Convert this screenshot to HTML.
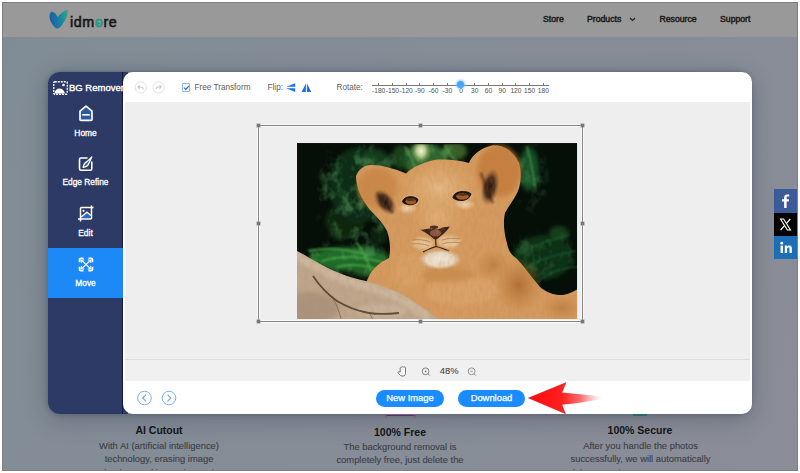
<!DOCTYPE html>
<html><head><meta charset="utf-8">
<style>
*{margin:0;padding:0;box-sizing:border-box}
html,body{width:800px;height:473px;overflow:hidden;background:#fff;font-family:"Liberation Sans",sans-serif}
.abs{position:absolute}
.txt{position:absolute;white-space:nowrap;line-height:1}
#frame{position:absolute;left:2px;top:2px;width:796px;height:469px;background:linear-gradient(120deg,#808c95 0%,#858d97 45%,#8b8d98 100%);border:1px solid #808080;overflow:hidden}
#hdr{position:absolute;left:0;top:0;width:794px;height:34px;background:#999999}
.nav{position:absolute;top:12.4px;font-size:8.7px;font-weight:400;color:#1a1a1a;line-height:1;-webkit-text-stroke:0.45px #1a1a1a}
#modal-shadow{position:absolute;left:48px;top:72px;width:703px;height:342px;border-radius:12px;box-shadow:0 0 5px rgba(30,40,60,.35), 0 5px 24px rgba(30,40,60,.3)}
#side{position:absolute;left:48px;top:72px;width:80px;height:342px;background:#2e3a66;border-radius:12px 0 0 12px;overflow:hidden}
#panel{position:absolute;left:123px;top:72px;width:628.7px;height:342px;background:#fff;border-radius:10px;overflow:hidden}
.lbl{position:absolute;color:#fff;font-size:8.4px;font-weight:400;-webkit-text-stroke:0.3px #fff;white-space:nowrap;text-align:center;width:75px;left:0;line-height:1}
.tick{position:absolute;top:82px;width:1px;height:4px;background:#666}
.rl{position:absolute;top:87px;font-size:6.6px;color:#444;line-height:1;width:20px;text-align:center}
.desc{position:absolute;font-size:9.4px;color:#3c3f47;-webkit-text-stroke:0.12px #3c3f47;text-align:center;line-height:13.25px;white-space:normal}
.ttl{position:absolute;font-size:10.5px;font-weight:700;color:#141414;line-height:1;text-align:center}
</style></head><body>
<div id="frame">
  <div id="hdr">
    <svg class="abs" style="left:40px;top:0px" width="28" height="28" viewBox="0 0 28 28">
      <defs><linearGradient id="lg1" x1="0" y1="0.2" x2="1" y2="0"><stop offset="0" stop-color="#1c5fa6"/><stop offset="0.5" stop-color="#1a85a0"/><stop offset="1" stop-color="#2aab84"/></linearGradient></defs>
      <path d="M9 8.8 C11 8.5 13 11 14.8 14 C17 11 20 8 24.8 6.5 C24.5 12 23 17 19 22 C17.5 24 16 25.6 14.5 25.6 C12.5 25.6 11 23.5 9.5 21.5 C7.5 18.5 6.3 16 6.5 13 C6.7 10.5 7.5 9 9 8.8 Z" fill="url(#lg1)"/>
    </svg>
    <div class="txt" style="left:67px;top:12.2px;font-size:14.3px;font-weight:400;color:#141414;letter-spacing:0.6px;-webkit-text-stroke:0.55px #141414">idm<span style="color:#1f9a86;-webkit-text-stroke:0.55px #1f9a86">o</span>re</div>
    <svg class="abs" style="left:92.6px;top:16.8px" width="6" height="7" viewBox="0 0 6 7"><path d="M1.6 1.6 L4.6 3.5 L1.6 5.4 Z" fill="#1f9a86"/></svg>
    <div class="nav" style="left:540px">Store</div>
    <div class="nav" style="left:584px">Products</div>
    <svg class="abs" style="left:626px;top:14px" width="7" height="5" viewBox="0 0 7 5"><path d="M1 1 L3.5 3.5 L6 1" stroke="#222" stroke-width="1.2" fill="none"/></svg>
    <div class="nav" style="left:656.5px">Resource</div>
    <div class="nav" style="left:717px">Support</div>
  </div>
</div>

<!-- background page text -->
<div class="abs" style="left:0;top:0;width:797px;height:470px;overflow:hidden">

<div class="abs" style="left:385px;top:414.5px;width:31px;height:1.3px;background:#8a2a86"></div><div class="abs" style="left:385px;top:415px;width:2px;height:4px;background:linear-gradient(#a05aa0,rgba(160,90,160,0))"></div><div class="abs" style="left:414px;top:415px;width:2px;height:4px;background:linear-gradient(#a05aa0,rgba(160,90,160,0))"></div>
<div class="abs" style="left:633px;top:414px;width:14px;height:2px;background:#2a8a7a"></div>
<div class="ttl" style="left:109px;top:425.3px;width:100px">AI Cutout</div>
<div class="desc" style="left:89px;top:439px;width:140px">With AI (artificial intelligence) technology, erasing image background is precise and</div>
<div class="ttl" style="left:350px;top:427px;width:100px">100% Free</div>
<div class="desc" style="left:325px;top:440px;width:150px">The background removal is completely free, just delete the background with the clean image</div>
<div class="ttl" style="left:590px;top:425.3px;width:100px">100% Secure</div>
<div class="desc" style="left:563px;top:439px;width:155px">After you handle the photos successfully, we will automatically delete your images to protect your</div>

</div>
<!-- social -->
<div class="abs" style="left:774px;top:189px;width:23px;height:24px;background:#3d5a99"></div>
<svg class="abs" style="left:774px;top:189px" width="23" height="24" viewBox="0 0 23 24"><path d="M12.6 19 V12.6 H14.8 L15.1 10.2 H12.6 V8.8 C12.6 8.1 12.8 7.6 13.8 7.6 H15.2 V5.5 C14.9 5.5 14.2 5.4 13.3 5.4 C11.4 5.4 10.1 6.6 10.1 8.6 V10.2 H8 V12.6 H10.1 V19 Z" fill="#fff"/></svg>
<div class="abs" style="left:774px;top:213px;width:23px;height:23px;background:#050505"></div>
<svg class="abs" style="left:774px;top:213px" width="23" height="23" viewBox="0 0 23 23"><path d="M6.5 6 H9.6 L16.5 17 H13.4 Z" fill="none" stroke="#fff" stroke-width="1.1"/><path d="M6.6 17 L10.7 12.3 M12.3 10.6 L16.3 6" stroke="#fff" stroke-width="1.2"/></svg>
<div class="abs" style="left:774px;top:236px;width:23px;height:23px;background:#1d6fb5"></div>
<svg class="abs" style="left:774px;top:236px" width="23" height="23" viewBox="0 0 23 23"><rect x="6.6" y="9.6" width="2.4" height="7.4" fill="#fff"/><circle cx="7.8" cy="7.2" r="1.4" fill="#fff"/><path d="M10.8 9.6 H13 V10.7 C13.5 9.9 14.3 9.4 15.4 9.4 C17.2 9.4 17.8 10.5 17.8 12.4 V17 H15.5 V12.9 C15.5 12 15.3 11.4 14.4 11.4 C13.5 11.4 13.1 12 13.1 13 V17 H10.8 Z" fill="#fff"/></svg>

<div id="modal-shadow"></div>
<div id="side">
  <div class="abs" style="left:74px;top:0;width:1.2px;height:342px;background:#121a46"></div>
  <svg class="abs" style="left:5px;top:9px" width="15" height="14" viewBox="0 0 15 14">
    <rect x="0.75" y="0.75" width="13.5" height="12.5" rx="1" fill="none" stroke="#fff" stroke-width="1.3" stroke-dasharray="2 1"/>
    <circle cx="10.5" cy="4" r="1.3" fill="#fff"/>
    <path d="M1.5 12.5 C2 9 4 7.5 6.5 7.5 C9 7.5 11 9 12 12.5 Z" fill="#fff"/>
  </svg>
  <div class="txt" style="left:21px;top:11.3px;font-size:9.5px;color:#fff;-webkit-text-stroke:0.35px #fff">BG Remover</div>
  <!-- home -->
  <svg class="abs" style="left:30px;top:33px" width="16" height="17" viewBox="0 0 16 17">
    <path d="M2 6.2 L8 1.2 L14 6.2 V14.5 C14 15 13.6 15.3 13 15.3 H3 C2.4 15.3 2 15 2 14.5 Z" fill="#2b5aa0" stroke="#fff" stroke-width="1.7" stroke-linejoin="round"/>
    <rect x="4.2" y="9" width="7.6" height="1.6" fill="#fff"/>
  </svg>
  <div class="lbl" style="top:57.3px">Home</div>
  <!-- edge refine -->
  <svg class="abs" style="left:30px;top:84px" width="16" height="16" viewBox="0 0 16 16">
    <path d="M9 2 H3 C2 2 1.5 2.6 1.5 3.5 V12.8 C1.5 13.7 2 14.3 3 14.3 H12.3 C13.2 14.3 13.8 13.7 13.8 12.8 V6" fill="none" stroke="#fff" stroke-width="1.6" stroke-linecap="round"/>
    <path d="M13.8 1 L10.8 7.5 C10 9.5 8 11 5.2 11.4 C5.5 8.6 7 6.6 9 5.6 Z" fill="#2b5aa0" stroke="#fff" stroke-width="1.3" stroke-linejoin="round"/>
  </svg>
  <div class="lbl" style="top:106.3px">Edge Refine</div>
  <!-- edit -->
  <svg class="abs" style="left:29px;top:133px" width="18" height="18" viewBox="0 0 18 18">
    <path d="M3.5 16.5 V3.5 C3.5 2.8 4 2.5 4.5 2.5 H16.5 M1 14 H13.5 C14.2 14 14.5 13.5 14.5 13 V0.5" fill="none" stroke="#fff" stroke-width="1.5"/>
    <circle cx="6.5" cy="5.8" r="1.1" fill="#fff"/>
    <path d="M4 12.5 L10 7.5 L13.5 10.5 V13 H5 Z" fill="#2b6ac0"/>
    <path d="M3.8 12.3 L10 7.2 L14 10.5" fill="none" stroke="#fff" stroke-width="1.3"/>
  </svg>
  <div class="lbl" style="top:156.5px">Edit</div>
  <div class="abs" style="left:0;top:176px;width:76px;height:50px;background:#1d89f6"></div>
  <!-- move -->
  <svg class="abs" style="left:30px;top:185px" width="16" height="15" viewBox="0 0 16 15">
    <path d="M1.6 5.2 V2.6 C1.6 1.9 2.1 1.4 2.9 1.4 H5.6 M10.4 1.4 H13.1 C13.9 1.4 14.4 1.9 14.4 2.6 V5.2 M14.4 9.8 V12.4 C14.4 13.1 13.9 13.6 13.1 13.6 H10.4 M5.6 13.6 H2.9 C2.1 13.6 1.6 13.1 1.6 12.4 V9.8" fill="none" stroke="#fff" stroke-width="1.8"/>
    <path d="M4 3.6 L12 11.4 M12 3.6 L4 11.4" stroke="#fff" stroke-width="1.3"/>
    <path d="M3.3 3 H6.2 M3.3 3 V5.8 M12.7 3 H9.8 M12.7 3 V5.8 M12.7 12 H9.8 M12.7 12 V9.2 M3.3 12 H6.2 M3.3 12 V9.2" stroke="#fff" stroke-width="1"/>
  </svg>
  <div class="lbl" style="top:207px">Move</div>
</div>
<div id="panel">
  <div class="abs" style="left:2.3px;top:30px;width:624.5px;height:257px;background:#eeeeee"></div>
  <div class="abs" style="left:2.3px;top:287px;width:624.5px;height:22px;background:#f0f0f0;border-top:1px solid #dcdcdc"></div>
  <!-- undo redo -->
  <svg class="abs" style="left:10px;top:9px" width="38" height="13" viewBox="0 0 38 13">
    <circle cx="7.75" cy="6.5" r="5.6" fill="none" stroke="#dcdcdc" stroke-width="0.9"/>
    <path d="M5 6 H8.2 C9.6 6 10.3 7 10 8.4 M6.8 4.3 L5 6 L6.8 7.7" fill="none" stroke="#c8c8c8" stroke-width="1.1"/>
    <circle cx="25.6" cy="6.5" r="5.6" fill="none" stroke="#dcdcdc" stroke-width="0.9"/>
    <path d="M28.3 6 H25.1 C23.7 6 23 7 23.3 8.4 M26.5 4.3 L28.3 6 L26.5 7.7" fill="none" stroke="#c8c8c8" stroke-width="1.1"/>
  </svg>
  <!-- checkbox -->
  <div class="abs" style="left:58.5px;top:11px;width:8.5px;height:8.5px;border:1px solid #8fb4ee;border-radius:1px;background:#fff"></div>
  <svg class="abs" style="left:58.5px;top:11px" width="9" height="9" viewBox="0 0 9 9"><path d="M2 4.6 L3.8 6.3 L7 2.8" fill="none" stroke="#1b6fe0" stroke-width="1.2"/></svg>
  <div class="txt" style="left:71.5px;top:12px;font-size:8.2px;color:#606060">Free Transform</div>
  <div class="txt" style="left:144.5px;top:12px;font-size:8.2px;color:#606060">Flip:</div>
  <svg class="abs" style="left:163px;top:11px" width="26" height="10" viewBox="0 0 26 10">
    <path d="M0.2 3.7 L9.2 0.3 V3.7 Z M0.2 5.2 H9.2 V9.1 Z" fill="#1a73e8"/>
    <path d="M15.6 9.1 L19.9 0.3 V9.1 Z M20.9 0.3 L25.2 9.1 H20.9 Z" fill="#1a73e8"/>
  </svg>
  <div class="txt" style="left:213.5px;top:12px;font-size:8.2px;color:#606060">Rotate:</div>
  <!-- rotate ruler -->
  <div class="abs" style="left:249px;top:13px;width:177px;height:1px;background:#777"></div>
  <div class="abs" style="left:255.20px;top:11px;width:1px;height:3px;background:#777"></div>
<div class="txt" style="left:245.70px;top:15.5px;width:20px;text-align:center;font-size:6.6px;color:#505050">-180</div>
<div class="abs" style="left:268.92px;top:11px;width:1px;height:3px;background:#777"></div>
<div class="txt" style="left:259.42px;top:15.5px;width:20px;text-align:center;font-size:6.6px;color:#505050">-150</div>
<div class="abs" style="left:282.64px;top:11px;width:1px;height:3px;background:#777"></div>
<div class="txt" style="left:273.14px;top:15.5px;width:20px;text-align:center;font-size:6.6px;color:#505050">-120</div>
<div class="abs" style="left:296.36px;top:11px;width:1px;height:3px;background:#777"></div>
<div class="txt" style="left:286.86px;top:15.5px;width:20px;text-align:center;font-size:6.6px;color:#505050">-90</div>
<div class="abs" style="left:310.08px;top:11px;width:1px;height:3px;background:#777"></div>
<div class="txt" style="left:300.58px;top:15.5px;width:20px;text-align:center;font-size:6.6px;color:#505050">-60</div>
<div class="abs" style="left:323.80px;top:11px;width:1px;height:3px;background:#777"></div>
<div class="txt" style="left:314.30px;top:15.5px;width:20px;text-align:center;font-size:6.6px;color:#505050">-30</div>
<div class="abs" style="left:337.52px;top:11px;width:1px;height:3px;background:#777"></div>
<div class="txt" style="left:328.02px;top:15.5px;width:20px;text-align:center;font-size:6.6px;color:#505050">0</div>
<div class="abs" style="left:351.24px;top:11px;width:1px;height:3px;background:#777"></div>
<div class="txt" style="left:341.74px;top:15.5px;width:20px;text-align:center;font-size:6.6px;color:#505050">30</div>
<div class="abs" style="left:364.96px;top:11px;width:1px;height:3px;background:#777"></div>
<div class="txt" style="left:355.46px;top:15.5px;width:20px;text-align:center;font-size:6.6px;color:#505050">60</div>
<div class="abs" style="left:378.68px;top:11px;width:1px;height:3px;background:#777"></div>
<div class="txt" style="left:369.18px;top:15.5px;width:20px;text-align:center;font-size:6.6px;color:#505050">90</div>
<div class="abs" style="left:392.40px;top:11px;width:1px;height:3px;background:#777"></div>
<div class="txt" style="left:382.90px;top:15.5px;width:20px;text-align:center;font-size:6.6px;color:#505050">120</div>
<div class="abs" style="left:406.12px;top:11px;width:1px;height:3px;background:#777"></div>
<div class="txt" style="left:396.62px;top:15.5px;width:20px;text-align:center;font-size:6.6px;color:#505050">150</div>
<div class="abs" style="left:419.84px;top:11px;width:1px;height:3px;background:#777"></div>
<div class="txt" style="left:410.34px;top:15.5px;width:20px;text-align:center;font-size:6.6px;color:#505050">180</div>
<div class="abs" style="left:334.2px;top:9.1px;width:7px;height:7px;border-radius:50%;background:#45a6f5;box-shadow:0 0 2px 1.2px rgba(120,190,250,.75)"></div>
  <!-- photo -->
<svg class="abs" style="left:174px;top:71px" width="281" height="176" viewBox="0 0 281 176">
<defs>
  <radialGradient id="g_glow" cx="0.5" cy="0.5" r="0.5"><stop offset="0" stop-color="#f6f4d8"/><stop offset="0.4" stop-color="#d0dca0" stop-opacity="0.85"/><stop offset="1" stop-color="#6a9a48" stop-opacity="0"/></radialGradient>
  <radialGradient id="rg" cx="0.5" cy="0.5" r="0.5"><stop offset="0" stop-color="#fff" stop-opacity="1"/><stop offset="1" stop-color="#fff" stop-opacity="0"/></radialGradient>
  <radialGradient id="g_face" cx="0.5" cy="0.5" r="0.5"><stop offset="0" stop-color="#e4b884"/><stop offset="1" stop-color="#e0ac72" stop-opacity="0"/></radialGradient>
  <radialGradient id="g_shade" cx="0.5" cy="0.5" r="0.5"><stop offset="0" stop-color="#a8642a" stop-opacity="0.8"/><stop offset="1" stop-color="#b87432" stop-opacity="0"/></radialGradient>
  <radialGradient id="g_earin" cx="0.5" cy="0.5" r="0.5"><stop offset="0" stop-color="#24140e"/><stop offset="0.55" stop-color="#4a2c1c" stop-opacity="0.9"/><stop offset="1" stop-color="#8a5a30" stop-opacity="0"/></radialGradient>
  <radialGradient id="g_muz" cx="0.5" cy="0.5" r="0.5"><stop offset="0" stop-color="#f2eadc"/><stop offset="0.65" stop-color="#e8dac4" stop-opacity="0.95"/><stop offset="1" stop-color="#dcc0a0" stop-opacity="0"/></radialGradient>
  <radialGradient id="g_light" cx="0.5" cy="0.5" r="0.5"><stop offset="0" stop-color="#ecd2ae" stop-opacity="0.9"/><stop offset="1" stop-color="#e6c090" stop-opacity="0"/></radialGradient>
  <filter id="soft" x="-5%" y="-5%" width="110%" height="110%"><feGaussianBlur stdDeviation="0.45"/></filter>
  <filter id="blur2" x="-50%" y="-50%" width="200%" height="200%"><feGaussianBlur stdDeviation="2"/></filter>
  <filter id="blur1" x="-50%" y="-50%" width="200%" height="200%"><feGaussianBlur stdDeviation="1"/></filter>
  <filter id="fur" x="0" y="0" width="100%" height="100%"><feTurbulence type="fractalNoise" baseFrequency="0.35 0.12" numOctaves="2" seed="3"/><feColorMatrix values="0 0 0 0 0.45  0 0 0 0 0.25  0 0 0 0 0.08  0 0 0 1.4 -0.55"/><feComposite in2="SourceGraphic" operator="in"/></filter>
  <filter id="leafnoise" x="0" y="0" width="100%" height="100%"><feTurbulence type="fractalNoise" baseFrequency="0.09 0.07" numOctaves="3" seed="7"/><feColorMatrix values="0 0 0 0 0.10  0 0 0 0 0.36  0 0 0 0 0.12  0 0 0 3.4 -1.6"/></filter>
  <radialGradient id="mfade" cx="0.5" cy="0.5" r="0.5"><stop offset="0" stop-color="#fff"/><stop offset="0.7" stop-color="#fff" stop-opacity="0.7"/><stop offset="1" stop-color="#fff" stop-opacity="0"/></radialGradient>
  <mask id="leafmask"><rect width="281" height="176" fill="#000"/><ellipse cx="62" cy="50" rx="50" ry="60" fill="url(#mfade)"/><ellipse cx="130" cy="20" rx="40" ry="26" fill="url(#mfade)"/><ellipse cx="232" cy="35" rx="22" ry="40" fill="url(#mfade)" opacity="0.6"/><ellipse cx="245" cy="112" rx="38" ry="28" fill="url(#mfade)" opacity="0.6"/><ellipse cx="50" cy="115" rx="50" ry="20" fill="url(#mfade)"/></mask>
  <clipPath id="lionclip"><path d="M59 33 C62 26 67 22 74 22 C84 22 96 25 109 30.5 C116 24 128 18 141 16.5 C152 16 164 17.5 172 20 C175 12 183 5 196 2.2 C208 2 217 9 222 20 C225 30 224 44 219 52 C216 58 211 64 208 70 C206 78 207 90 210 100 C211 106 213 111 219 115 C226 122 233 132 243 144 C250 150 258 152.5 266 152 C272 151 277 148 281 146 V176 H60 C62 160 66 145 73 131 C79 122 86 118 92 115 C94 108 93 96 90 88 C86 80 80 74 74 68 C66 58 59 46 59 33 Z"/></clipPath>
  <clipPath id="clipP"><rect width="281" height="176"/></clipPath>
</defs>
<g clip-path="url(#clipP)">
<rect width="281" height="176" fill="#050e07"/>
<!-- foliage -->
<g filter="url(#blur2)">
  <ellipse cx="62" cy="42" rx="30" ry="38" fill="#123016" opacity="0.9"/>
  <ellipse cx="78" cy="22" rx="16" ry="16" fill="#1a4420" opacity="0.8"/>
  <ellipse cx="48" cy="78" rx="20" ry="18" fill="#0e2a12" opacity="0.9"/>
  <ellipse cx="82" cy="92" rx="9" ry="10" fill="#0e2812" opacity="0.8"/>
  <ellipse cx="128" cy="17" rx="22" ry="17" fill="#3a7436" opacity="0.85"/>
  <ellipse cx="158" cy="8" rx="12" ry="9" fill="#4e8236" opacity="0.7"/>
  <ellipse cx="104" cy="14" rx="9" ry="12" fill="#1f4c22" opacity="0.8"/>
  <ellipse cx="232" cy="26" rx="10" ry="22" fill="#1a5a28" opacity="0.85"/>
  <ellipse cx="52" cy="116" rx="40" ry="12" fill="#24702a" opacity="0.95"/>
  <ellipse cx="72" cy="126" rx="18" ry="8" fill="#226226" opacity="0.9"/>
  <ellipse cx="246" cy="114" rx="30" ry="22" fill="#0f3416" opacity="0.9"/>
  <ellipse cx="262" cy="90" rx="10" ry="7" fill="#184a20" opacity="0.8"/>
</g>
<rect width="281" height="176" filter="url(#leafnoise)" mask="url(#leafmask)" opacity="0.6"/>
<ellipse cx="124" cy="8" rx="11" ry="13" fill="url(#g_glow)"/>
<g fill="none" stroke-linecap="round" filter="url(#blur1)" opacity="0.9">
  <path d="M12 108 C30 104 50 106 70 112 M25 118 C45 112 68 114 88 120 M40 124 C55 120 70 122 86 128 M60 100 C66 108 70 115 74 128" stroke="#4eae4a" stroke-width="1.8"/>
  <path d="M222 112 C235 102 250 98 272 92 M226 128 C240 116 258 112 278 108 M240 140 C250 130 262 125 280 124" stroke="#22663a" stroke-width="1.5" opacity="0.75"/>
  <path d="M108 4 C112 10 116 16 118 26 M148 2 C150 8 154 14 160 18 M230 4 C233 14 236 28 238 44" stroke="#5aa050" stroke-width="1.4"/>
</g>
<rect x="0" y="0" width="281" height="1.2" fill="#151515"/>
<!-- lion -->
<g filter="url(#soft)">
<path d="M59 33 C62 26 67 22 74 22 C84 22 96 25 109 30.5 C116 24 128 18 141 16.5 C152 16 164 17.5 172 20 C175 12 183 5 196 2.2 C208 2 217 9 222 20 C225 30 224 44 219 52 C216 58 211 64 208 70 C206 78 207 90 210 100 C211 106 213 111 219 115 C226 122 233 132 243 144 C250 150 258 152.5 266 152 C272 151 277 148 281 146 V176 H60 C62 160 66 145 73 131 C79 122 86 118 92 115 C94 108 93 96 90 88 C86 80 80 74 74 68 C66 58 59 46 59 33 Z" fill="#d59a5e"/>
<ellipse cx="142" cy="45" rx="40" ry="30" fill="url(#g_face)"/>
<ellipse cx="140" cy="75" rx="28" ry="20" fill="url(#g_face)" opacity="0.7"/>
<ellipse cx="110" cy="66" rx="10" ry="6" fill="url(#g_light)"/>
<ellipse cx="168" cy="62" rx="11" ry="6" fill="url(#g_light)"/>
<ellipse cx="202" cy="28" rx="22" ry="26" fill="#c27634" opacity="0.7" filter="url(#blur2)"/>
<ellipse cx="80" cy="45" rx="20" ry="20" fill="#c67e3c" opacity="0.6" filter="url(#blur2)"/>
<ellipse cx="222" cy="142" rx="24" ry="28" fill="url(#g_shade)"/>
<ellipse cx="196" cy="122" rx="18" ry="16" fill="url(#g_shade)" opacity="0.6"/>
<ellipse cx="265" cy="165" rx="22" ry="14" fill="url(#g_shade)" opacity="0.6"/>
<ellipse cx="165" cy="148" rx="36" ry="14" fill="#e6b27a" opacity="0.35" filter="url(#blur2)"/>
<ellipse cx="112" cy="128" rx="16" ry="16" fill="#e0aa70" opacity="0.4" filter="url(#blur2)"/>
<ellipse cx="150" cy="132" rx="26" ry="8" fill="#b97838" opacity="0.35" filter="url(#blur2)"/>
<!-- ear insides -->
<ellipse cx="88" cy="59" rx="9" ry="15" transform="rotate(-38 88 59)" fill="url(#g_earin)"/>
<ellipse cx="193" cy="44" rx="9" ry="19" transform="rotate(12 193 44)" fill="url(#g_earin)"/>
<path d="M184 30 C188 40 190 50 196 60" stroke="#2a1810" stroke-width="2.5" fill="none" opacity="0.6" filter="url(#blur1)"/>
<path d="M80 50 C86 58 90 64 96 70" stroke="#2a1810" stroke-width="2.5" fill="none" opacity="0.5" filter="url(#blur1)"/>
<!-- light fur around eyes/muzzle -->
<ellipse cx="111" cy="65" rx="10" ry="5" fill="url(#g_light)"/>
<ellipse cx="167" cy="61" rx="11" ry="5" fill="url(#g_light)"/>
<ellipse cx="126" cy="102" rx="12" ry="8" fill="url(#g_light)" opacity="0.8"/>
<ellipse cx="152" cy="100" rx="13" ry="8" fill="url(#g_light)" opacity="0.8"/>
<!-- eyes -->
<ellipse cx="113.3" cy="57.8" rx="8.4" ry="4.9" fill="#e8c89a" opacity="0.6" filter="url(#blur1)"/>
<ellipse cx="165" cy="53" rx="9.8" ry="5.2" fill="#e8c89a" opacity="0.6" filter="url(#blur1)"/>
<path d="M105 58.5 C107 54 111 53 115 53.3 C118 53.6 120.5 55 121.5 57 C120 61 116 62.6 112 62.3 C108.5 62 106 60.5 105 58.5 Z" fill="#140c08"/>
<ellipse cx="113.8" cy="58.2" rx="5.3" ry="3.2" fill="#9a5828"/>
<ellipse cx="113.8" cy="56.6" rx="5" ry="1.5" fill="#3a2012" opacity="0.7"/>
<path d="M155.3 54.5 C157 50 161 48 166 48 C170 48 173 49.2 174.5 51 C173 55.5 169 58 164 58 C160 58 157 56.8 155.3 54.5 Z" fill="#140c08"/>
<ellipse cx="165.3" cy="53.2" rx="6.2" ry="3.5" fill="#a05e2a"/>
<ellipse cx="165.3" cy="51.4" rx="5.8" ry="1.6" fill="#3a2012" opacity="0.7"/>
<!-- nose -->
<ellipse cx="126" cy="100" rx="11" ry="6" fill="#ecd0a8" opacity="0.55" filter="url(#blur1)"/>
<ellipse cx="152" cy="98" rx="12" ry="6" fill="#ecd0a8" opacity="0.55" filter="url(#blur1)"/>
<path d="M116 97 C122 96 128 97 133 99 M115 101 C121 100 127 101 132 103 M145 97 C151 95 157 95 163 96 M145 101 C151 99 157 99 164 100" stroke="#9a6030" stroke-width="0.8" fill="none" opacity="0.7"/>
<path d="M123 86.6 C127 87 130 85.5 133 85.5 C136 85.5 138 86.5 139 86.5 C141 86.5 145 84.5 148 84 C150 83.8 152 83.5 153 83.2 C151 87 147 90.5 142.5 94 C141 95.5 140 96.5 138.5 96.5 C137 96.5 136 95.5 134.5 94 C130 90.5 126 88.5 123 86.6 Z" fill="#3e241a"/>
<ellipse cx="138.5" cy="90" rx="5.5" ry="3.6" fill="#8e5242"/>
<ellipse cx="137" cy="84.2" rx="4.2" ry="1.7" fill="#4a2a22"/>
<path d="M138.7 96 L139 103.5 M126 109 C129 107.5 131 106.5 133.5 105.5 C136 104.5 137.5 104 139 103.5 C141 104 144 105 147 106 C149 107 151 107.5 152 108" stroke="#2e1a12" stroke-width="1.1" fill="none"/>
<ellipse cx="143" cy="116.4" rx="22" ry="10.5" fill="url(#g_muz)"/>
</g>
<rect x="60" y="0" width="221" height="176" fill="#000" filter="url(#fur)" opacity="0.35" clip-path="url(#lionclip)"/>
<!-- log -->
<clipPath id="logclip"><path d="M0 108 C10 113 22 121 35 127 C48 133 60 136 72 139 C85 143 98 147 108 153 C118 159 128 166 135 171 C138 173 141 175 143 177 H0 Z"/></clipPath>
<filter id="lognoise" x="0" y="0" width="100%" height="100%"><feTurbulence type="fractalNoise" baseFrequency="0.18 0.12" numOctaves="3" seed="11"/><feColorMatrix values="0 0 0 0 0.42  0 0 0 0 0.32  0 0 0 0 0.22  0 0 0 2.2 -0.95"/></filter>
<g clip-path="url(#logclip)">
<rect x="0" y="100" width="150" height="77" fill="#bfa58a"/>
<path d="M-5 112 C10 118 22 126 35 132 C48 138 60 141 72 144 C85 148 98 152 108 158 C118 164 126 170 132 176" stroke="#d4c0a6" stroke-width="9" fill="none" opacity="0.65" filter="url(#blur2)"/>
<ellipse cx="12" cy="165" rx="30" ry="16" fill="#9c8670" opacity="0.55" filter="url(#blur2)"/>
<ellipse cx="85" cy="168" rx="25" ry="7" fill="#ccbaa2" opacity="0.6" filter="url(#blur2)"/>
<rect x="0" y="100" width="150" height="77" filter="url(#lognoise)" opacity="0.35"/>
<path d="M16 133 C22 142 30 151 40 158 C50 164 60 168 72 170 C82 171.5 92 171 102 170" stroke="#4a3426" stroke-width="1.8" fill="none" opacity="0.8" filter="url(#soft)"/>
<path d="M36 156 C40 162 42 168 44 176 M72 170 C74 173 75 175 76 177" stroke="#6a5040" stroke-width="1" fill="none" opacity="0.6"/>
</g>

</g>
<rect x="280" y="0" width="1" height="176" fill="#e8e8e8"/>
</svg>
  <!-- photo frame -->
  <div class="abs" style="left:135px;top:53px;width:325px;height:197px;border:1px solid #858585;box-shadow:0 0 0 1px rgba(255,255,255,.7), inset 0 0 0 1px rgba(255,255,255,.7)"></div>
<div class="abs" style="left:134.0px;top:52.0px;width:3px;height:3px;background:#777;box-shadow:0 0 0 0.5px #999"></div>
<div class="abs" style="left:295.5px;top:52.0px;width:3px;height:3px;background:#777;box-shadow:0 0 0 0.5px #999"></div>
<div class="abs" style="left:458.0px;top:52.0px;width:3px;height:3px;background:#777;box-shadow:0 0 0 0.5px #999"></div>
<div class="abs" style="left:134.0px;top:149.5px;width:3px;height:3px;background:#777;box-shadow:0 0 0 0.5px #999"></div>
<div class="abs" style="left:458.0px;top:149.5px;width:3px;height:3px;background:#777;box-shadow:0 0 0 0.5px #999"></div>
<div class="abs" style="left:134.0px;top:248.0px;width:3px;height:3px;background:#777;box-shadow:0 0 0 0.5px #999"></div>
<div class="abs" style="left:295.5px;top:248.0px;width:3px;height:3px;background:#777;box-shadow:0 0 0 0.5px #999"></div>
<div class="abs" style="left:458.0px;top:248.0px;width:3px;height:3px;background:#777;box-shadow:0 0 0 0.5px #999"></div>
  <!-- zoom bar -->
  <svg class="abs" style="left:274px;top:294px" width="10" height="11" viewBox="0 0 10 11">
    <path d="M3.2 6 V2.2 C3.2 1.3 4 0.9 4.7 1.1 C5.2 0.7 6.2 0.7 6.7 1.1 C7.3 0.8 8.3 1 8.5 1.8 V7.6 C8.5 9.1 7.5 10 6.1 10 H5 C4 10 3.3 9.4 2.7 8.7 L1.2 6.8 C0.8 6.2 1.4 5.4 2.2 5.8 Z" fill="#f8f8f8" stroke="#6a6a6a" stroke-width="0.9" stroke-linejoin="round"/>
  </svg>
  <svg class="abs" style="left:298px;top:295px" width="10" height="9" viewBox="0 0 10 9">
    <circle cx="4.6" cy="4.3" r="3.4" fill="none" stroke="#777" stroke-width="0.9"/><circle cx="4.6" cy="4.3" r="0.9" fill="#777"/><path d="M7 6.8 L8.8 8.6" stroke="#777" stroke-width="0.9"/>
  </svg>
  <div class="txt" style="left:316.8px;top:294.3px;font-size:9.4px;color:#3a3a3a;-webkit-text-stroke:0.05px #3a3a3a">48%</div>
  <svg class="abs" style="left:344px;top:295px" width="10" height="9" viewBox="0 0 10 9">
    <circle cx="4.6" cy="4.3" r="3.4" fill="none" stroke="#888" stroke-width="0.9"/><path d="M3.3 4.3 H5.9" stroke="#888" stroke-width="0.8"/><path d="M7 6.8 L8.8 8.6" stroke="#888" stroke-width="0.9"/>
  </svg>
  <!-- footer -->
  <svg class="abs" style="left:13px;top:318px" width="42" height="16" viewBox="0 0 42 16">
    <circle cx="8.5" cy="8" r="6.8" fill="none" stroke="#7ab0ea" stroke-width="1"/>
    <path d="M10 4.6 L6.7 8 L10 11.4" fill="none" stroke="#6aa6e8" stroke-width="1.1"/>
    <circle cx="33" cy="8" r="6.8" fill="none" stroke="#7ab0ea" stroke-width="1"/>
    <path d="M31.5 4.6 L34.8 8 L31.5 11.4" fill="none" stroke="#6aa6e8" stroke-width="1.1"/>
  </svg>
  <div class="abs" style="left:253px;top:317.5px;width:68px;height:17px;border-radius:9px;background:#1a8cff"></div>
  <div class="abs" style="left:335px;top:317.5px;width:67px;height:17px;border-radius:9px;background:#1a8cff"></div>
  <div class="txt" style="left:253px;top:321px;width:68px;text-align:center;font-size:9.4px;color:#fff;-webkit-text-stroke:0.25px #fff">New Image</div>
  <div class="txt" style="left:335px;top:321px;width:67px;text-align:center;font-size:9.4px;color:#fff;-webkit-text-stroke:0.25px #fff">Download</div>
</div>

<!-- red arrow -->
<svg class="abs" style="left:520px;top:376px" width="90" height="42" viewBox="0 0 90 42">
  <defs><linearGradient id="ag" x1="8" y1="0" x2="84" y2="0" gradientUnits="userSpaceOnUse">
    <stop offset="0" stop-color="#ff0a0a"/><stop offset="0.45" stop-color="#ff2020"/><stop offset="0.7" stop-color="#ff7070"/><stop offset="0.88" stop-color="#ffc0c0" stop-opacity="0.6"/><stop offset="1" stop-color="#ffffff" stop-opacity="0"/></linearGradient></defs>
  <path d="M8.4 22 L46 6.6 L42 16.4 C55 17.5 70 19 84 21 V23 C70 25 55 27.5 42 28.8 L45.5 37.8 Z" fill="url(#ag)"/>
  <path d="M42 16.4 L46 6.6 L8.4 22 L45.5 37.8 L42 28.8" fill="none" stroke="#a01010" stroke-width="0.7" stroke-opacity="0.55" stroke-linejoin="round"/>
</svg>
</body></html>
